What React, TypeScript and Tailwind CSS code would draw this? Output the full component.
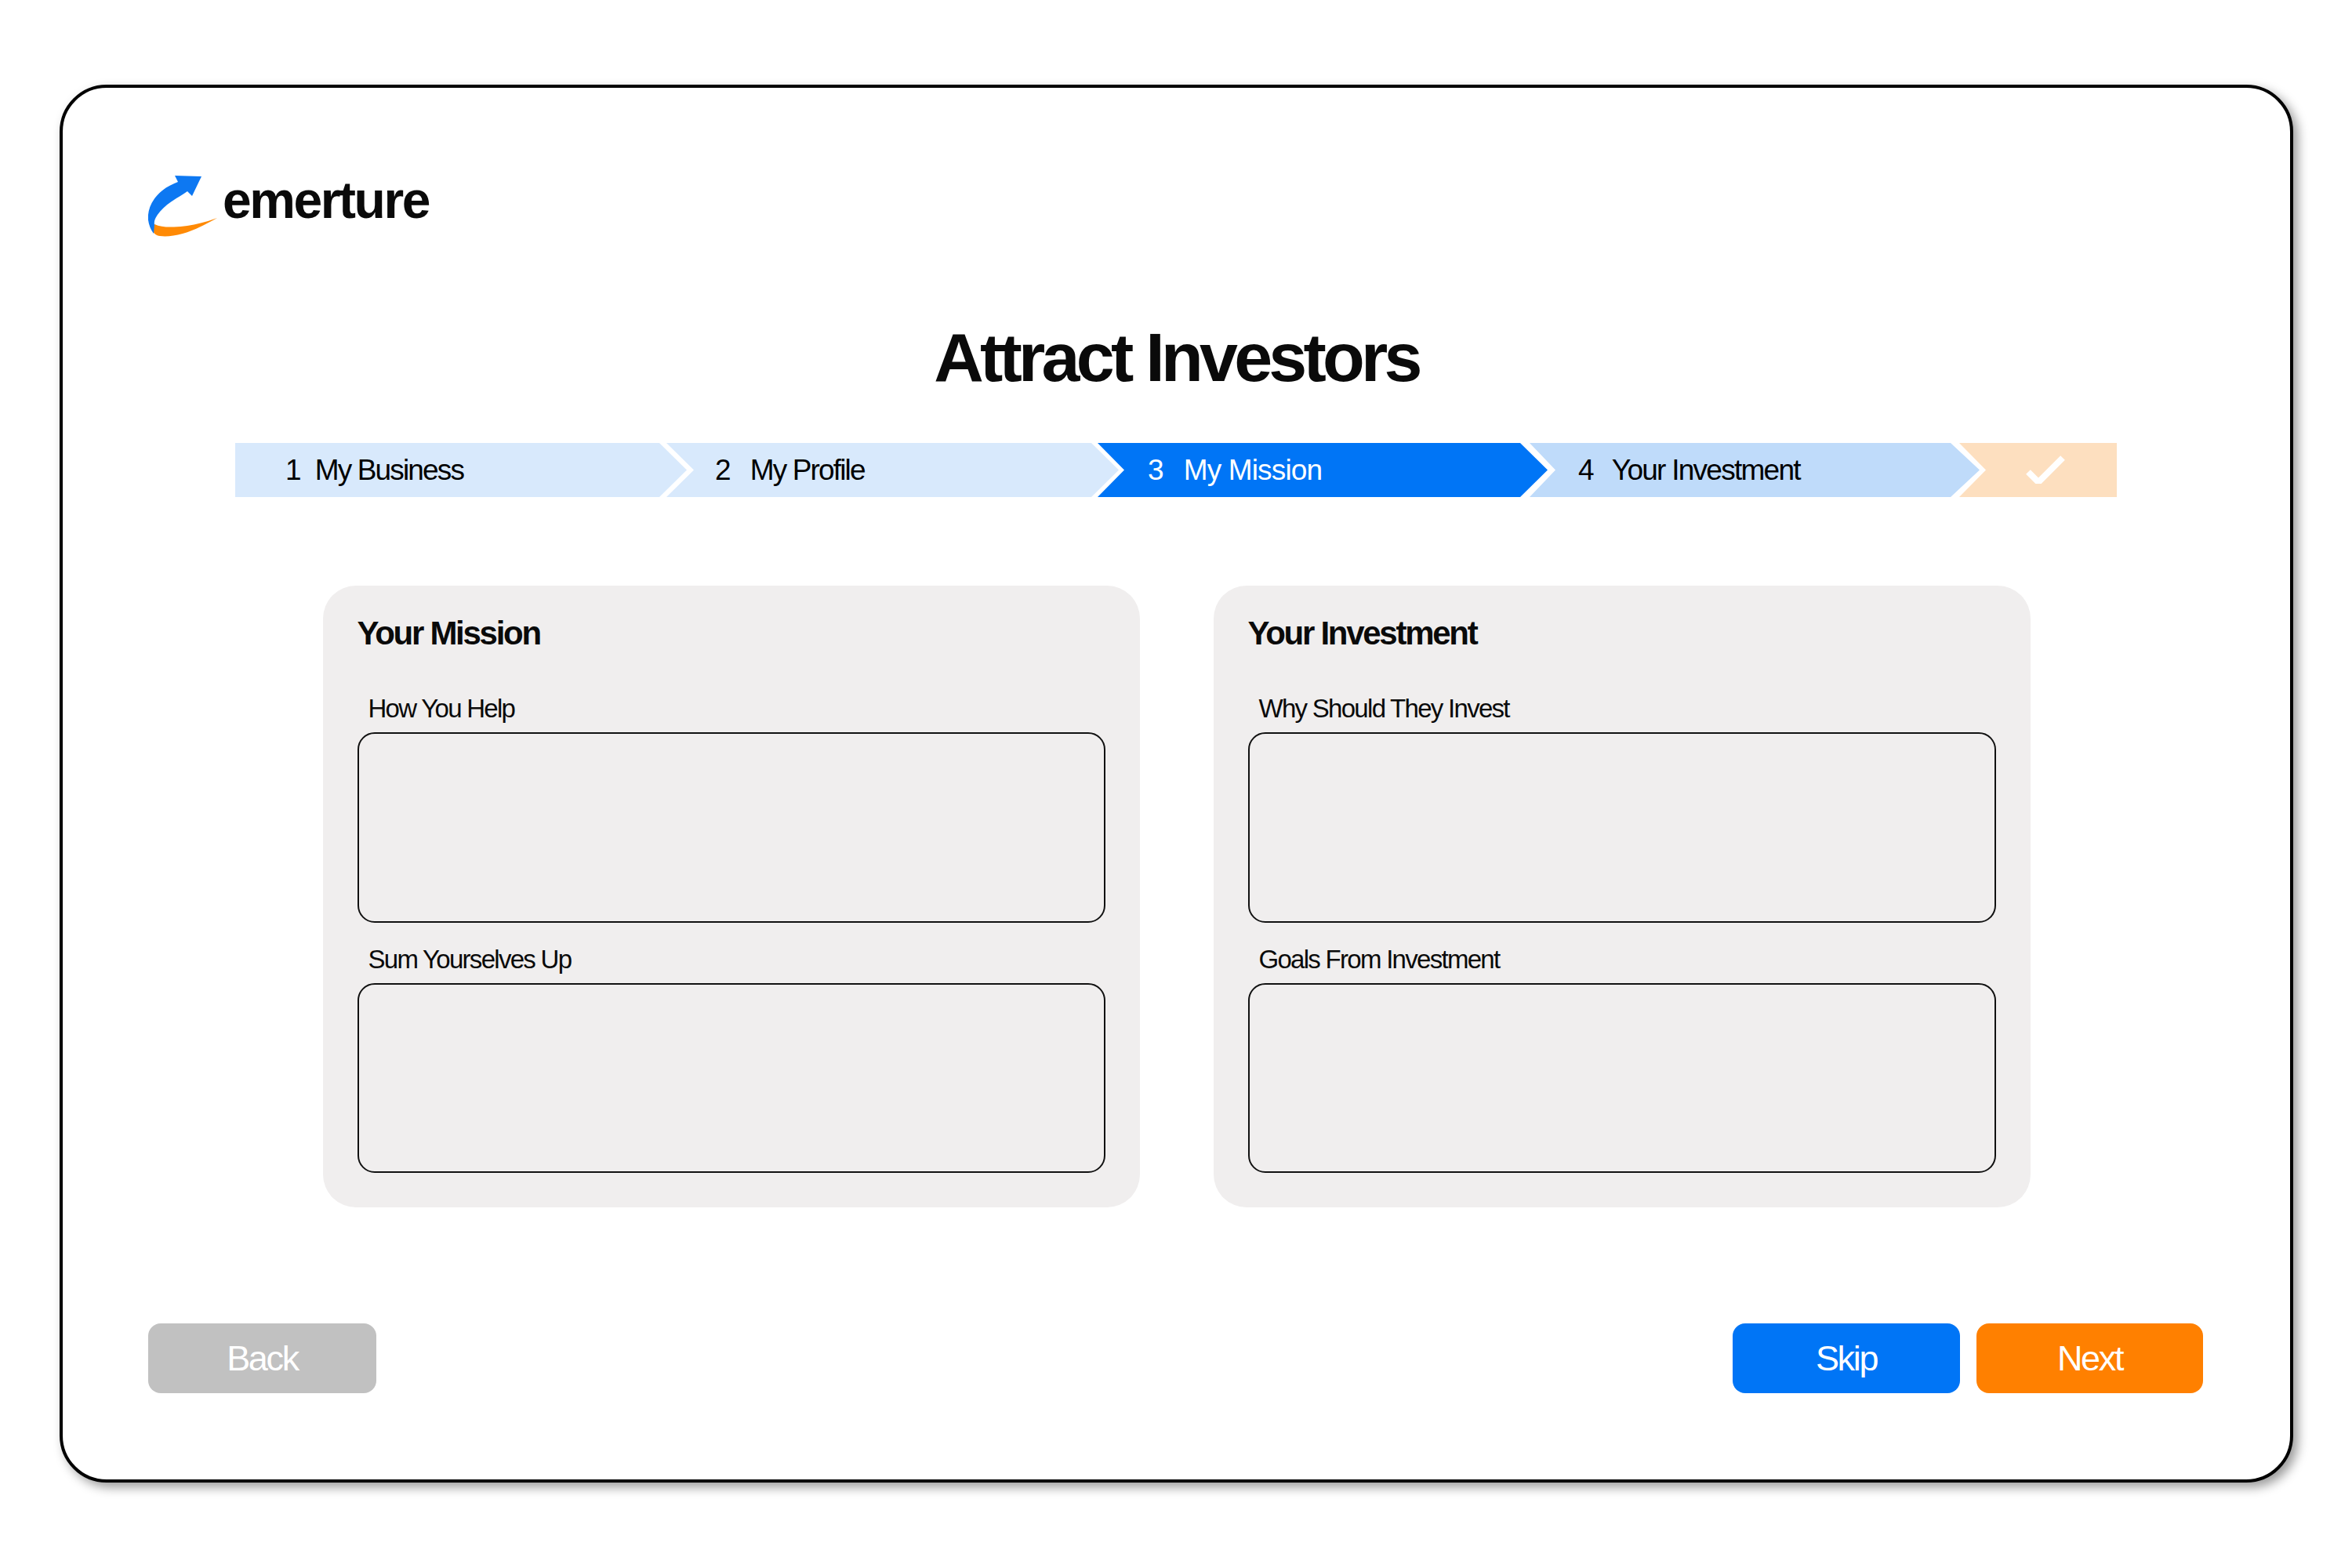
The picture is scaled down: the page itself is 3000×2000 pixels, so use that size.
const steps = [
  { num: "1", label: "My Business", cls: "w-[576px] pl-[64px] gap-[19px] tracking-[-0.05em] bg-[#d8e9fc] text-black [clip-path:polygon(0_0,calc(100%-35px)_0,100%_50%,calc(100%-35px)_100%,0_100%)]" },
  { num: "2", label: "My Profile", cls: "w-[577px] ml-[-26px] pl-[62px] gap-[26px] tracking-[-0.05em] bg-[#d8e9fc] text-black [clip-path:polygon(0_0,calc(100%-35px)_0,100%_50%,calc(100%-35px)_100%,0_100%,35px_50%)]" },
  { num: "3", label: "My Mission", cls: "w-[574px] ml-[-27px] pl-[64px] gap-[26px] tracking-[-0.023em] bg-[#0075f6] text-white [clip-path:polygon(0_0,calc(100%-35px)_0,100%_50%,calc(100%-35px)_100%,0_100%,34px_50%)]" },
  { num: "4", label: "Your Investment", cls: "w-[574px] ml-[-23px] pl-[62px] gap-[24px] tracking-[-0.047em] bg-[#bfdbfa] text-black [clip-path:polygon(0_0,calc(100%-37px)_0,100%_50%,calc(100%-37px)_100%,0_100%,33px_50%)]" },
];

function Logo() {
  return (
    <svg viewBox="189 222 88 79" className="w-[88px] h-[79px] shrink-0">
      <path
        d="M197 285 C204 288 212 289 222 288.5 C240 288 258 284 277 277 C262 285 248 293 233 297 C222 300 212 301 204 300 C199 299.5 196 297 195 293 Z"
        fill="#ff8a05"
      />
      <path
        d="M223 223 L257 224 L245 249 L239 243 C226 252 213 258 204 269 C199 275 196 280 197 286 L196 297 C191 290 188 281 189 273 C190 262 196 251 207 242 C213 237 220 234 227 231 Z"
        fill="#0d78f2"
      />
    </svg>
  );
}

function Panel({ title, first, second }: { title: string; first: string; second: string }) {
  return (
    <div className="w-[1042px] h-[793px] bg-[#f0eeee] rounded-[42px] px-[44px] pt-[37px]">
      <h2 className="h-[48px] text-[42px] leading-[48px] font-bold tracking-[-0.054em] text-[#0a0a0a]">
        {title}
      </h2>
      <label className="block mt-[52px] mb-[10px] pl-[14px] h-[40px] text-[33px] leading-[40px] tracking-[-0.052em] text-[#0a0a0a]">
        {first}
      </label>
      <textarea className="block w-full h-[243px] resize-none rounded-[22px] border-2 border-[#111] bg-transparent" />
      <label className="block mt-[27px] mb-[10px] pl-[14px] h-[40px] text-[33px] leading-[40px] tracking-[-0.052em] text-[#0a0a0a]">
        {second}
      </label>
      <textarea className="block w-full h-[242px] resize-none rounded-[22px] border-2 border-[#111] bg-transparent" />
    </div>
  );
}

export default function App() {
  return (
    <div className="w-[3000px] h-[2000px] bg-white pl-[76px] pt-[108px] font-['Liberation_Sans',Arial,sans-serif]">
      <div className="w-[2849px] h-[1783px] border-4 border-black rounded-[60px] bg-white shadow-[6px_6px_14px_rgba(0,0,0,0.4)] px-[109px] pt-[110px]">
        <div className="flex items-center h-[80px] gap-[7px]">
          <Logo />
          <span className="text-[66px] leading-[80px] font-bold tracking-[-0.037em] text-[#0a0a0a] mt-[-14px]">emerture</span>
        </div>

        <h1 className="mt-[104px] h-[100px] text-center text-[88px] leading-[100px] font-bold tracking-[-0.054em] text-[#0a0a0a]">
          Attract Investors
        </h1>

        <div className="flex mt-[59px] ml-[111px] h-[69px]">
          {steps.map((s) => (
            <div key={s.num} className={`flex items-center shrink-0 text-[37px] ${s.cls}`}>
              <span>{s.num}</span>
              <span>{s.label}</span>
            </div>
          ))}
          <div className="flex items-center justify-center shrink-0 w-[201px] ml-[-26px] pl-[19px] pb-[2px] bg-[#fddfbf] [clip-path:polygon(0_0,100%_0,100%_100%,0_100%,34px_50%)]">
            <svg viewBox="0 0 50 36" className="w-[50px] h-[36px]" fill="none" stroke="#fff" strokeWidth="8">
              <polyline points="3,21 16,34 47,3" />
            </svg>
          </div>
        </div>

        <div className="flex justify-center gap-[94px] mt-[113px]">
          <Panel title="Your Mission" first="How You Help" second="Sum Yourselves Up" />
          <Panel title="Your Investment" first="Why Should They Invest" second="Goals From Investment" />
        </div>

        <div className="flex items-center mt-[148px] pr-[2px]">
          <button className="w-[291px] h-[89px] rounded-[16px] bg-[#c1c1c1] text-white text-[45px] tracking-[-0.052em]">Back</button>
          <button className="ml-auto w-[290px] h-[89px] rounded-[16px] bg-[#0075f6] text-white text-[45px] tracking-[-0.052em]">Skip</button>
          <button className="ml-[21px] w-[289px] h-[89px] rounded-[16px] bg-[#ff8000] text-white text-[45px] tracking-[-0.052em]">Next</button>
        </div>
      </div>
    </div>
  );
}
